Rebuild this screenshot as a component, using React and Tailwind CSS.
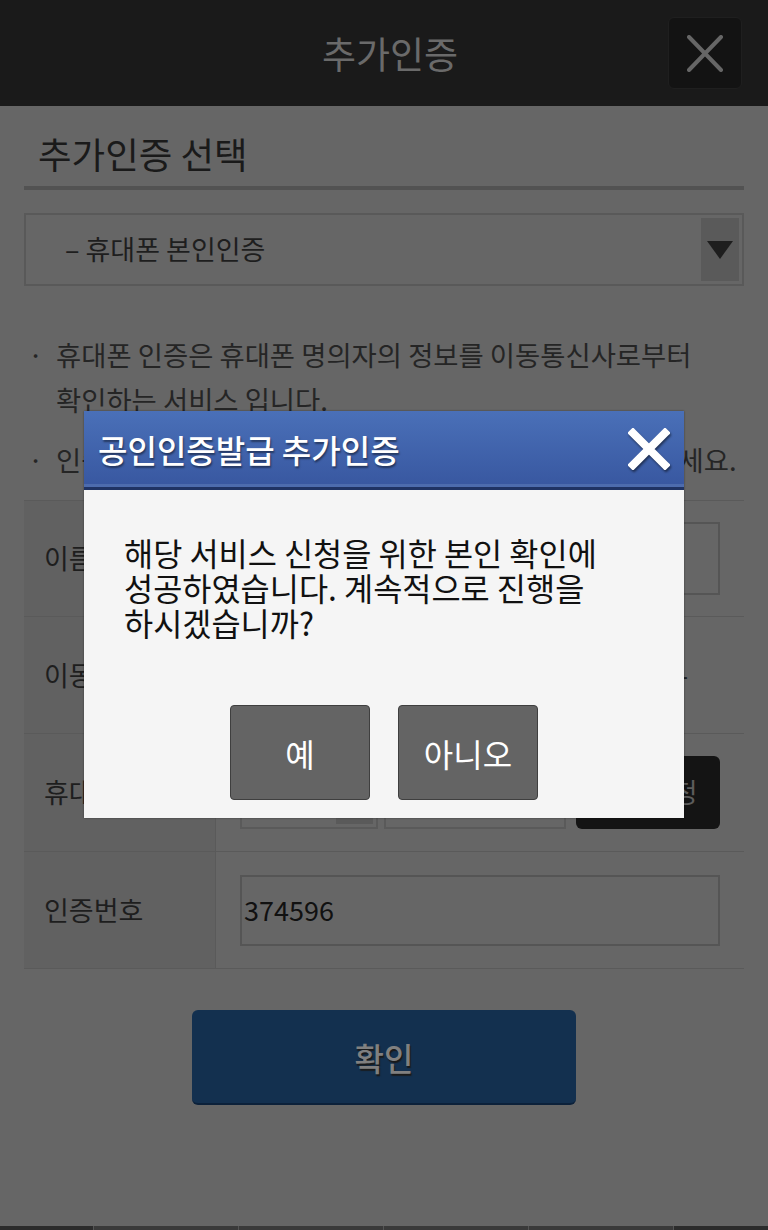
import React from "react";

const FONT = { fontFamily: '"Noto Sans CJK KR", "Noto Sans", sans-serif' };

function Row({ label, children, h = "h-[117px]" }) {
  return (
    <div className={`flex ${h} border-b border-[#5a5a5a]`}>
      <div className="w-[192px] shrink-0 bg-[#616161] border-r border-[#5a5a5a] flex items-center pl-[20px] text-[27px] text-[#1e1e1e]">
        {label}
      </div>
      <div className="flex-1 flex items-center pl-[24px] pr-[24px]">{children}</div>
    </div>
  );
}

export default function App() {
  return (
    <div style={FONT} className="relative w-[768px] h-[1230px] overflow-hidden bg-[#666666] flex flex-col">
      {/* Header */}
      <div className="h-[106px] shrink-0 bg-[#1a1a1a] grid grid-cols-[1fr_auto_1fr] items-center">
        <div />
        <div className="pl-[12px] text-[37px] leading-none text-[#6a6a6a]">추가인증</div>
        <div className="flex justify-end pr-[26px]">
          <div className="w-[74px] h-[72px] rounded-[6px] bg-[#131313] border border-[#1f1f1f] flex items-center justify-center">
            <svg width="36" height="37" viewBox="0 0 36 37">
              <path d="M2 2 L34 35 M34 2 L2 35" stroke="#666" strokeWidth="4" strokeLinecap="round" fill="none" />
            </svg>
          </div>
        </div>
      </div>

      {/* Content */}
      <div className="px-[24px] flex flex-col">
        <div className="pt-[24px] pb-[8px] border-b-4 border-[#525252]">
          <div className="pl-[14px] text-[36.5px] leading-[48px] text-[#1a1a1a]">추가인증 선택</div>
        </div>

        <div className="mt-[23px] h-[73px] border-2 border-[#595959] p-[3px] flex">
          <div className="flex-1 flex items-center pl-[36px] text-[27px] text-[#1e1e1e]">– 휴대폰 본인인증</div>
          <div className="w-[38px] bg-[#5a5a5a] flex items-center justify-center">
            <svg width="26" height="18" viewBox="0 0 26 18">
              <path d="M0 0 H26 L13 18 Z" fill="#1e1e1e" />
            </svg>
          </div>
        </div>

        <div className="mt-[46px] text-[27.4px] leading-[45px] text-[#252525] flex flex-col gap-[15px]">
          <div className="flex">
            <span className="w-[32px] shrink-0 pl-[4px]">·</span>
            <span>휴대폰 인증은 휴대폰 명의자의 정보를 이동통신사로부터<br />확인하는 서비스 입니다.</span>
          </div>
          <div className="flex">
            <span className="w-[32px] shrink-0 pl-[4px]">·</span>
            <span className="whitespace-nowrap">인증번호가 오지 않으면 휴대폰 번호를 다시 한번 확인하세요.</span>
          </div>
        </div>

        {/* Table */}
        <div className="mt-[18px] border-t border-[#5a5a5a]">
          <Row label="이름" h="h-[116px]">
            <div className="w-full h-[73px] border-2 border-[#555]" />
          </Row>
          <Row label="이동통신사">
            <div className="w-full flex justify-end pr-[32px] text-[27px] text-[#1e1e1e]">-</div>
          </Row>
          <Row label="휴대폰번호" h="h-[118px]">
            <div className="flex items-center gap-[6px] w-full">
              <div className="w-[138px] h-[73px] border-2 border-[#5a5a5a] flex justify-end p-[3px]">
                <div className="w-[37px] bg-[#5a5a5a]" />
              </div>
              <div className="w-[182px] h-[73px] border-2 border-[#5a5a5a]" />
              <div className="ml-[4px] w-[144px] h-[73px] rounded-[6px] bg-[#141414] flex items-center justify-center text-[27px] text-[#5c5c5c]">인증요청</div>
            </div>
          </Row>
          <Row label="인증번호">
            <div className="w-full h-[71px] border-2 border-[#555] flex items-center pl-[2px] text-[27px] text-[#111]">374596</div>
          </Row>
        </div>

        <div className="mt-[41px] flex justify-center">
          <div className="w-[384px] h-[95px] rounded-[6px] bg-[#13304f] border-b-2 border-[#0c213a] flex items-center justify-center text-[32px] font-medium text-[#808080] [text-shadow:1px_2px_1px_#1a1a1a]">
            확인
          </div>
        </div>
      </div>

      {/* Bottom bar */}
      <div className="mt-auto h-[4px] flex">
        <div className="w-[93px] bg-[#2c2c2c]" />
        <div className="w-[145px] bg-[#3a3a3a] border-l border-[#555]" />
        <div className="w-[145px] bg-[#3a3a3a] border-l border-[#555]" />
        <div className="w-[145px] bg-[#3a3a3a] border-l border-[#555]" />
        <div className="w-[146px] bg-[#3a3a3a] border-x border-[#555]" />
        <div className="flex-1 bg-[#2c2c2c]" />
      </div>

      {/* Modal */}
      <div className="absolute left-[84px] top-[411px] w-[600px] h-[407px] bg-[#f5f5f5] flex flex-col shadow-[0_0_2px_rgba(0,0,0,0.4)]">
        <div className="h-[79px] shrink-0 bg-gradient-to-b from-[#4a70b8] to-[#3857a0] border-b-[3px] border-[#1f3364] flex flex-col">
          <div className="flex-1 flex items-center justify-between pl-[14px] pr-[14px] pt-[2px]">
            <span className="text-[32px] font-medium text-white [text-shadow:1px_2px_2px_rgba(0,0,0,0.45)]">공인인증발급 추가인증</span>
            <svg width="42" height="42" viewBox="0 0 42 42" className="drop-shadow-[1px_2px_1px_rgba(0,0,0,0.5)]">
              <path d="M5 5 L37 37 M37 5 L5 37" stroke="#fff" strokeWidth="8" strokeLinecap="square" fill="none" />
            </svg>
          </div>
          <div className="h-[3px] bg-[#4d6cae]" />
        </div>
        <div className="pt-[45px] pl-[40px] text-[31.7px] leading-[35px] text-[#111]">
          해당 서비스 신청을 위한 본인 확인에<br />성공하였습니다. 계속적으로 진행을<br />하시겠습니까?
        </div>
        <div className="mt-auto pb-[18px] flex justify-center gap-[28px]">
          <div className="w-[140px] h-[95px] rounded-[4px] bg-[#646464] border border-[#3f3f3f] flex items-center justify-center text-[32px] text-white">예</div>
          <div className="w-[140px] h-[95px] rounded-[4px] bg-[#646464] border border-[#3f3f3f] flex items-center justify-center text-[32px] text-white">아니오</div>
        </div>
      </div>
    </div>
  );
}
